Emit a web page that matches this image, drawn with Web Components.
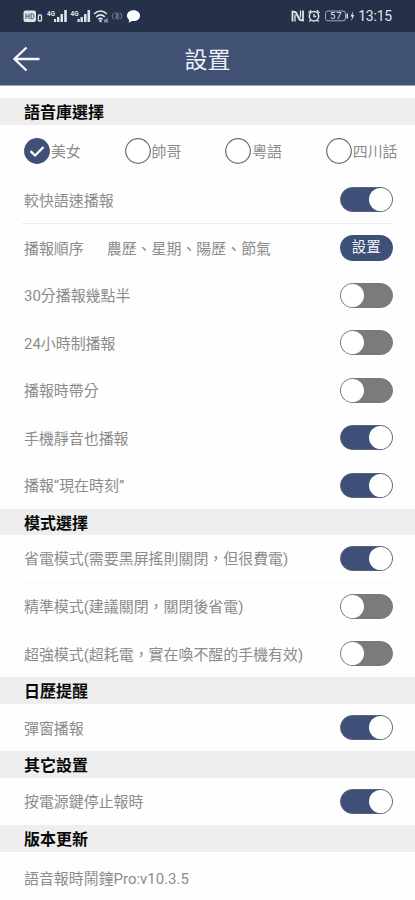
<!DOCTYPE html>
<html lang="zh-TW">
<head>
<meta charset="utf-8">
<title>設置</title>
<style>
  body {
    margin: 0;
    background: #fefefe;
    font-family: Roboto, "Noto Sans CJK TC", sans-serif;
  }
</style>
</head>
<body>
<settings-app></settings-app>

<script>
function define(name, html, setup) {
  const template = document.createElement('template');
  template.innerHTML = html;
  customElements.define(name, class extends HTMLElement {
    constructor() {
      super();
      this.attachShadow({ mode: 'open' });
      this.shadowRoot.appendChild(template.content.cloneNode(true));
    }
    connectedCallback() {
      if (setup) setup(this);
    }
  });
}

define('status-bar', `
  <style>
    :host {
      display: flex;
      align-items: center;
      justify-content: space-between;
      box-sizing: border-box;
      height: 32px;
      padding: 0 23px;
      background: #253049;
      color: #dfe3ea;
    }
    svg { display: block; }
    .right { display: flex; align-items: center; }
    .time { font-size: 14px; line-height: 16px; margin-left: 3px; letter-spacing: -0.2px; }
    text { font-family: Roboto, sans-serif; }
  </style>
  <svg width="120" height="20" viewBox="23 6 120 20" fill="#dfe3ea">
    <!-- HD -->
    <rect x="23.5" y="10.5" width="12.500" height="11.500" rx="2"/>
    <path d="M26 13.500v5.500M29 13.500v5.500M26 16.200h3M31 13.800v5h1.200q1.800-.5 1.800-2.500t-1.800-2.500z" fill="none" stroke="#4a536a" stroke-width="1"/>
    <rect x="38.300" y="15" width="3.200" height="6" rx="1" fill="none" stroke="#dfe3ea" stroke-width="1.300"/>
    <!-- señal 4G x2 -->
    <text x="47" y="15.500" font-size="7" font-weight="700" textLength="8" lengthAdjust="spacingAndGlyphs">4G</text>
    <path d="M54 19h2.200v3H54zM57 17h2.400v5H57zM60.500 14h2.500v8h-2.500zM64.200 10h2.600v12h-2.600z"/>
    <text x="70.500" y="15.500" font-size="7" font-weight="700" textLength="8" lengthAdjust="spacingAndGlyphs">4G</text>
    <path d="M77.500 19h2.200v3h-2.200zM80.500 17h2.400v5h-2.400zM84 14h2.500v8H84zM87.500 10h2.600v12h-2.600z"/>
    <!-- wifi -->
    <g fill="none" stroke="#dfe3ea" stroke-width="1.600">
      <path d="M94 14q6.500-6 13 0M96.200 16.800q4.300-3.800 8.600 0M98.400 19.300q2.100-1.800 4.200 0"/>
    </g>
    <circle cx="100.500" cy="21" r="1.200"/>
    <path d="M104.500 19.500h1v3h-1zM106.500 18.500h1v4h-1z"/>
    <g fill="none" stroke="#7b8292" stroke-width="1">
      <path d="M114 12.500q-3.500 3.500 0 7M120 12.500q3.500 3.500 0 7M115 13l4 4.500-2 2v-7l2 2-4 3.500"/>
    </g>
    <path d="M133.500 10.200c3.700 0 6.500 2.300 6.500 5.500s-2.800 5.400-6.500 5.400c-.5 0-1 0-1.500-.1l-3.300 1.800.5-2.900c-1.400-1-2.200-2.500-2.200-4.200 0-3.200 2.800-5.500 6.500-5.500z" fill="#fff"/>
  </svg>
  <div class="right">
    <svg width="65" height="20" viewBox="291 6 65 20" fill="none" stroke="#dfe3ea">
      <!-- NFC -->
      <path d="M293.500 21.500v-10l3 .5 4 7.500M304 10.500v10l-3-.5-4-7.500" stroke-width="1.800"/>
      <path d="M296 21.500v-7M301.500 10.500v7" stroke-width="1.300"/>
      <!-- alarma -->
      <circle cx="315" cy="16.200" r="4.700" stroke-width="1.500"/>
      <path d="M309.500 12.800l2.800-2.500M320.500 12.800l-2.800-2.500M315 13.800v2.700h2.200M311.700 20l-1.400 1.600M318.300 20l1.400 1.600" stroke-width="1.300"/>
      <!-- bateria -->
      <rect x="326.500" y="11" width="20" height="9.800" rx="2.500" stroke="#a4abb9"/>
      <path d="M348.200 13.500v5" stroke-width="1.500"/>
      <text x="331" y="19.300" font-size="9.500" fill="#dfe3ea" stroke="none" textLength="11.500">57</text>
      <path d="M354.200 11l-2.700 5.500h1.700l-.9 4.500 3-6h-1.700z" fill="#dfe3ea" stroke="none"/>
    </svg>
    <span class="time">13:15</span>
  </div>
`);

define('title-bar', `
  <style>
    :host {
      display: grid;
      grid-template-columns: 52px 1fr 52px;
      align-items: center;
      box-sizing: border-box;
      height: 54px;
      background: #415174;
      border-bottom: 1px solid #9ba4b8;
      color: #eceff5;
      font-size: 23px;
      line-height: 30px;
      text-align: center;
    }
    svg { display: block; margin-left: 12px; }
    span { padding-top: 4px; }
  </style>
  <svg width="29" height="28" viewBox="0 0 29 28" fill="none" stroke="#f4f6fa" stroke-width="2.400">
    <path d="M27.500 14H2.500M14.500 2.500L2.500 14l12 11.500"/>
  </svg>
  <span><slot></slot></span>
`);

define('settings-section', `
  <style>
    :host { display: block; }
    h2 {
      margin: 0;
      box-sizing: border-box;
      height: 26.4px;
      padding-left: 24px;
      background: #eee;
      color: #080808;
      font-size: 16px;
      font-weight: 700;
      line-height: 29px;
    }
  </style>
  <h2></h2>
  <slot></slot>
`, (el) => {
  el.shadowRoot.querySelector('h2').textContent = el.getAttribute('heading');
});

define('setting-row', `
  <style>
    :host {
      display: flex;
      align-items: center;
      justify-content: space-between;
      box-sizing: border-box;
      height: 47.45px;
      margin: 0 22.500px 0 22px;
      padding-left: 2px;
      color: #8c8c8c;
      font-size: 14.950px;
      line-height: 22px;
      white-space: pre;
    }
    :host([divider]) { border-bottom: 1.500px solid var(--divider, #ececec); }
    :host([tall]) { height: 52px; }
    .label { display: flex; gap: 23px; padding-top: 2px; }
  </style>
  <div class="label"><slot></slot></div>
  <slot name="control"></slot>
`);

define('toggle-switch', `
  <style>
    :host {
      display: flex;
      box-sizing: border-box;
      width: 52.500px;
      height: 25px;
      border: 1px solid #777;
      border-radius: 13px;
      background: #7b7b7b;
    }
    :host([on]) {
      justify-content: flex-end;
      background: #3e5077;
      border-color: #59647c;
    }
    .knob { width: 23px; height: 23px; border-radius: 50%; background: #fff; }
  </style>
  <div class="knob"></div>
`, (el) => {
  el.addEventListener('click', () => el.toggleAttribute('on'));
});

define('pill-button', `
  <style>
    :host {
      display: flex;
      align-items: center;
      justify-content: center;
      width: 52.500px;
      height: 26px;
      border-radius: 13px;
      background: #3e5077;
    }
    span {
      padding-top: 1px;
      color: #f0f3f8;
      font-size: 14.500px;
      font-weight: 400;
      line-height: 22px;
    }
  </style>
  <span><slot></slot></span>
`);

define('voice-group', `
  <style>
    :host {
      display: grid;
      grid-template-columns: repeat(4, 100.600px);
      align-items: center;
      height: 52px;
      padding-left: 24px;
      overflow: hidden;
    }
  </style>
  <slot></slot>
`, (el) => {
  // Solo una voz puede quedar marcada
  el.addEventListener('click', (e) => {
    const option = e.target.closest('voice-option');
    if (!option) return;
    el.querySelectorAll('voice-option').forEach((o) => o.toggleAttribute('checked', o === option));
  });
});

define('voice-option', `
  <style>
    :host {
      display: flex;
      align-items: center;
      gap: 1px;
      color: #8c8c8c;
      font-size: 14.900px;
      line-height: 22px;
      white-space: nowrap;
    }
    svg { display: block; flex: none; }
    circle { fill: #fff; stroke: #6f6f6f; }
    path { display: none; }
    span { padding-top: 2px; }
    :host([checked]) circle { fill: #3e5077; stroke: #3e5077; }
    :host([checked]) path { display: block; }
  </style>
  <svg width="26" height="26" viewBox="0 0 26 26">
    <circle cx="13" cy="13" r="12.300" stroke-width="1.200"/>
    <path d="M6.500 13.200l4.600 4.300 8.400-8.500" fill="none" stroke="#fff" stroke-width="2.300"/>
  </svg>
  <span><slot></slot></span>
`);

define('settings-app', `
  <style>
    :host {
      display: block;
      height: 900px;
      overflow: hidden;
    }
    main { padding-top: 12.300px; }
    .light { --divider: #f5f5f5; }
  </style>
  <status-bar></status-bar>
  <title-bar>設置</title-bar>
  <main>
    <settings-section heading="語音庫選擇">
      <voice-group>
        <voice-option checked>美女</voice-option>
        <voice-option>帥哥</voice-option>
        <voice-option>粵語</voice-option>
        <voice-option>四川話</voice-option>
      </voice-group>
      <setting-row divider>較快語速播報<toggle-switch slot="control" on></toggle-switch></setting-row>
      <setting-row><span>播報順序</span><span>農歷、星期、陽歷、節氣</span><pill-button slot="control">設置</pill-button></setting-row>
      <setting-row>30分播報幾點半<toggle-switch slot="control"></toggle-switch></setting-row>
      <setting-row>24小時制播報<toggle-switch slot="control"></toggle-switch></setting-row>
      <setting-row>播報時帶分<toggle-switch slot="control"></toggle-switch></setting-row>
      <setting-row>手機靜音也播報<toggle-switch slot="control" on></toggle-switch></setting-row>
      <setting-row>播報“現在時刻”<toggle-switch slot="control" on></toggle-switch></setting-row>
    </settings-section>
    <settings-section heading="模式選擇">
      <setting-row class="light" divider>省電模式(需要黑屏搖則關閉，但很費電)<toggle-switch slot="control" on></toggle-switch></setting-row>
      <setting-row>精準模式(建議關閉，關閉後省電)<toggle-switch slot="control"></toggle-switch></setting-row>
      <setting-row>超強模式(超耗電，實在喚不醒的手機有效)<toggle-switch slot="control"></toggle-switch></setting-row>
    </settings-section>
    <settings-section heading="日歷提醒">
      <setting-row>彈窗播報<toggle-switch slot="control" on></toggle-switch></setting-row>
    </settings-section>
    <settings-section heading="其它設置">
      <setting-row>按電源鍵停止報時<toggle-switch slot="control" on></toggle-switch></setting-row>
    </settings-section>
    <settings-section heading="版本更新">
      <setting-row tall>語音報時鬧鐘Pro:v10.3.5</setting-row>
    </settings-section>
  </main>
`);
</script>
</body>
</html>
